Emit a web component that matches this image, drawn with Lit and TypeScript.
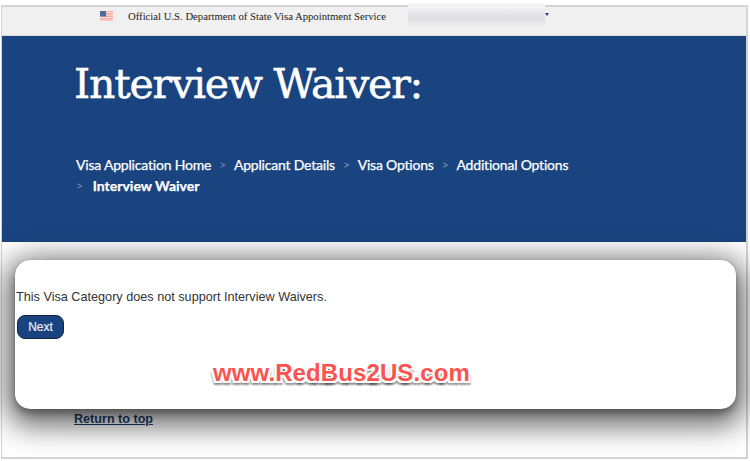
import { LitElement, html, css } from "lit";
import { customElement } from "lit/decorators.js";

@customElement("app-root")
export class AppRoot extends LitElement {
  static styles = css`
    :host {
      display: block;
      width: 750px;
      height: 461px;
      background: #fff;
      position: relative;
      overflow: hidden;
    }
    .frame {
      box-sizing: border-box;
      margin: 5px 2px 0 1px;
      height: 454px;
      border: 1px solid #d4d4d4;
      border-width: 2px 2px 2px 1px;
      display: flex;
      flex-direction: column;
      background: #fff;
    }
    .topbar {
      height: 28px;
      flex: none;
      box-sizing: content-box;
      background: #f0f0f0;
      border-bottom: 1px solid #dcdcdc;
      display: flex;
      align-items: flex-start;
      padding-left: 98px;
      gap: 15px;
      font: 10.7px/12px "Liberation Serif", serif;
      color: #222;
    }
    .topbar span {
      margin-top: 3px;
    }
    .flag {
      width: 13px;
      height: 10px;
      flex: none;
      display: block;
      margin-top: 4px;
    }
    .hero {
      height: 206px;
      flex: none;
      background: #1a4480;
      color: #fff;
      box-sizing: border-box;
      padding: 22px 0 0 72px;
    }
    h1 {
      margin: 0;
      font: 400 41px/52px "DejaVu Serif", serif;
      letter-spacing: -1.2px;
      -webkit-text-stroke: 0.5px #fff;
    }
    .crumbs {
      margin-top: 44px;
      margin-left: 2px;
      width: 500px;
      font: 400 14px/21px Lato, sans-serif;
      -webkit-text-stroke: 0.25px #fff;
      letter-spacing: -0.2px;
      display: flex;
      flex-wrap: wrap;
      align-items: center;
    }
    .crumbs .sep {
      color: #7f8da8;
      -webkit-text-stroke: 0;
      font-size: 12px;
      margin: 0 8px;
    }
    .crumbs .sep.first {
      margin-left: 0;
      margin-right: 10px;
    }
    .crumbs b {
      font-weight: 700;
      letter-spacing: 0;
    }
    .body {
      flex: 1;
      padding: 167px 0 0 72px;
      background: #fff;
    }
    .top-link {
      font: 700 12.6px/16px "Liberation Sans", sans-serif;
      color: #1a3f73;
      text-decoration: underline;
    }
    .blur {
      position: absolute;
      left: 408px;
      top: 3px;
      width: 137px;
      height: 24px;
      background: linear-gradient(#f4f4f4 0 20%, #e6e6e9 40%, #dfdfe4 65%, #eeeeef 100%);
      filter: blur(0.6px);
    }
    .caret {
      position: absolute;
      left: 545px;
      top: 13px;
      width: 0;
      height: 0;
      border-left: 2px solid transparent;
      border-right: 2px solid transparent;
      border-top: 3px solid #1a4480;
    }
    .card {
      position: absolute;
      left: 15px;
      top: 260px;
      width: 721px;
      height: 149px;
      box-sizing: border-box;
      background: #fff;
      border-radius: 15px;
      box-shadow: 0 0 1px rgba(0, 0, 0, 0.4), 0 5px 6px rgba(0, 0, 0, 0.25), 0 8px 30px 8px rgba(0, 0, 0, 0.62);
      padding: 29px 0 0 1px;
      font: 12.66px/16px "Liberation Sans", sans-serif;
      color: #333;
      display: flex;
      flex-direction: column;
      align-items: flex-start;
    }
    .card p {
      margin: 0;
    }
    button {
      margin: 10px 0 0 1px;
      width: 47px;
      height: 24px;
      box-sizing: border-box;
      border: 1px solid #14233f;
      border-radius: 8px;
      background: #1a4480;
      color: #e8edf5;
      font: 12px "Liberation Sans", sans-serif;
      -webkit-text-stroke: 0.2px #e8edf5;
      padding: 0;
    }
    .mark {
      align-self: flex-start;
      margin: 20px 0 0 197px;
      font: 700 24px/28px "Liberation Sans", sans-serif;
      color: #fb5450;
      letter-spacing: 0.1px;
      text-shadow:
        1px 0 0 #fff, -1px 0 0 #fff, 0 -1px 0 #fff, 0 1px 0 #fff,
        1px 1px 0 #fff, -1px -1px 0 #fff, 1px -1px 0 #fff, -1px 1px 0 #fff,
        2px 2px 0 #fff, -2px 2px 0 #fff, 2px 0 0 #fff, -2px 0 0 #fff,
        -2px 4px 2px rgba(0, 0, 0, 0.45), 2px 4px 2px rgba(0, 0, 0, 0.45);
    }
  `;

  render() {
    return html`
      <div class="frame">
        <div class="topbar">
          <svg class="flag" viewBox="0 0 13 10">
            <rect width="13" height="10" fill="#f4a9a4" />
            <path d="M0 1.5h13M0 4h13M0 6.5h13M0 9h13" stroke="#fbe3e1" stroke-width="1" />
            <rect width="6" height="5.5" fill="#4c6a9e" />
          </svg>
          <span>Official U.S. Department of State Visa Appointment Service</span>
        </div>
        <div class="hero">
          <h1>Interview Waiver:</h1>
          <div class="crumbs">
            <span>Visa Application Home</span><span class="sep">&gt;</span>
            <span>Applicant Details</span><span class="sep">&gt;</span>
            <span>Visa Options</span><span class="sep">&gt;</span>
            <span>Additional Options</span><span class="sep first">&gt;</span>
            <b>Interview Waiver</b>
          </div>
        </div>
        <div class="body"><a class="top-link">Return to top</a></div>
      </div>
      <div class="blur"></div>
      <div class="caret"></div>
      <div class="card">
        <p>This Visa Category does not support Interview Waivers.</p>
        <button>Next</button>
        <div class="mark">www.RedBus2US.com</div>
      </div>
    `;
  }
}
